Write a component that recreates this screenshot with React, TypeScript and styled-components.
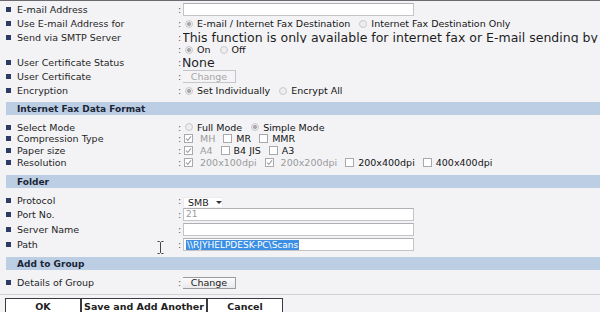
import styled, { createGlobalStyle } from "styled-components"

const GlobalStyle = createGlobalStyle`
  html, body {
    margin: 0;
    padding: 0;
    background: #f3f3f6;
  }
  body {
    font-family: "DejaVu Sans", Verdana, sans-serif;
    font-size: 9.5px;
    color: #222;
    overflow: hidden;
  }
`

const Page = styled.div`
  position: relative;
  width: 600px;
  height: 312px;
  overflow: hidden;
  border-top: 1px solid #6a6a70;
  box-sizing: border-box;
`

const Section = styled.div<{ top: number }>`
  margin-top: ${(p) => p.top}px;
`

const Row = styled.div<{ h: number }>`
  display: grid;
  grid-template-columns: 172px 5px 1fr;
  align-items: center;
  height: ${(p) => p.h}px;
  padding-left: 6px;
`

const Label = styled.div<{ bullet?: boolean }>`
  display: flex;
  align-items: center;
  gap: 6px;
  white-space: nowrap;
  color: #1f1f1f;

  &::before {
    content: "";
    width: 5px;
    height: 5px;
    background: ${(p) => (p.bullet === false ? "transparent" : "#2c3c66")};
  }
`

const Colon = styled.span`
  color: #555;
`

const Value = styled.div`
  display: flex;
  align-items: center;
  white-space: nowrap;
  overflow: hidden;
  height: 100%;
`

const BigText = styled.span`
  font-size: 12.5px;
  color: #1e1e1e;
  margin-left: -1px;
`

const Band = styled.div<{ top: number }>`
  display: flex;
  align-items: center;
  margin: ${(p) => p.top}px 0 0 6px;
  height: 13px;
  padding-left: 11px;
  background: #bbcee4;
  font-weight: bold;
  font-size: 9px;
  color: #1c2536;
`

const Option = styled.span<{ disabled?: boolean }>`
  display: inline-flex;
  align-items: center;
  gap: ${(p) => (p.disabled ? 7 : 4)}px;
  margin-right: 7px;
  color: ${(p) => (p.disabled ? "#9a9a9a" : "#141414")};
`

const Radio = styled.span<{ checked?: boolean }>`
  width: 8px;
  height: 8px;
  border-radius: 50%;
  box-sizing: border-box;
  border: 1px solid #c9c9cc;
  margin-left: 2px;
  background: ${(p) =>
    p.checked
      ? "radial-gradient(circle, #a8a8ac 0 1.8px, #ececee 2.2px)"
      : "#ededf0"};
`

const Box = styled.span`
  display: inline-flex;
  align-items: center;
  justify-content: center;
  width: 9px;
  height: 9px;
  box-sizing: border-box;
  border: 1px solid #a9a9ad;
  background: #fff;
  margin-left: 1px;
`

const TextInput = styled.div<{ w?: number }>`
  display: flex;
  align-items: center;
  box-sizing: border-box;
  width: ${(p) => p.w ?? 231}px;
  height: 13px;
  border: 1px solid #c4c4c8;
  border-top-color: #b0b0b4;
  background: #fff;
  padding-left: 2px;
  color: #9a9a9a;
  font-size: 9px;
`

const Selected = styled.span`
  background: #3c8fe3;
  color: #fff;
  line-height: 10px;
  padding: 0 1px;
`

const Select = styled.div`
  display: flex;
  align-items: center;
  gap: 7px;
  width: 40px;
  height: 11px;
  box-sizing: border-box;
  padding-left: 4px;
  background: #fff;
  border: 1px solid #ececef;
  color: #1a1a1a;
  margin-top: 3px;
`

const Caret = styled.span`
  width: 0;
  height: 0;
  border-left: 3px solid transparent;
  border-right: 3px solid transparent;
  border-top: 3px solid #333;
`

const SmallButton = styled.div<{ disabled?: boolean }>`
  display: flex;
  align-items: center;
  justify-content: center;
  box-sizing: border-box;
  width: 54px;
  height: ${(p) => (p.disabled ? 13 : 12)}px;
  border: 1px solid ${(p) => (p.disabled ? "#c6c6c9" : "#9b9ba0")};
  background: ${(p) =>
    p.disabled ? "#f4f4f6" : "linear-gradient(#fbfbfc, #e9e9ec)"};
  color: ${(p) => (p.disabled ? "#a5a5a8" : "#1a1a1a")};
  margin-left: -1px;
`

const Divider = styled.div`
  margin-top: 4px;
  height: 1px;
  background: #d2d2d6;
`

const ButtonBar = styled.div`
  display: flex;
  margin: 3px 0 0 5px;
`

const FormButton = styled.div<{ w: number }>`
  display: flex;
  align-items: center;
  justify-content: center;
  box-sizing: border-box;
  width: ${(p) => p.w}px;
  height: 18px;
  padding-bottom: 2px;
  border: 1px solid #3a3a3e;
  background: #fff;
  font-weight: bold;
  color: #222;
`

const Cursor = styled.svg`
  position: absolute;
  left: 157px;
  top: 240px;
`

function Check() {
  return (
    <svg width="7" height="7" viewBox="0 0 7 7">
      <path d="M1 3.6 L2.8 5.4 L6 1.4" fill="none" stroke="#a2a2a6" strokeWidth="1.1" />
    </svg>
  )
}

function CheckOption({ checked, disabled, children }: { checked?: boolean; disabled?: boolean; children: string }) {
  return (
    <Option disabled={disabled}>
      <Box>{checked && <Check />}</Box>
      {children}
    </Option>
  )
}

function RadioOption({ checked, children }: { checked?: boolean; children: string }) {
  return (
    <Option>
      <Radio checked={checked} />
      {children}
    </Option>
  )
}

function Field({ label, h, bullet, children }: { label: string; h: number; bullet?: boolean; children?: React.ReactNode }) {
  return (
    <Row h={h}>
      <Label bullet={bullet}>{label}</Label>
      <Colon>:</Colon>
      <Value>{children}</Value>
    </Row>
  )
}

export default function App() {
  return (
    <Page>
      <GlobalStyle />

      <Section top={1}>
        <Field label="E-mail Address" h={14}>
          <TextInput />
        </Field>
        <Field label="Use E-mail Address for" h={15}>
          <RadioOption checked>E-mail / Internet Fax Destination</RadioOption>
          <RadioOption>Internet Fax Destination Only</RadioOption>
        </Field>
        <Field label="Send via SMTP Server" h={12}>
          <BigText>This function is only available for internet fax or E-mail sending by</BigText>
        </Field>
        <Field label="" h={13} bullet={false}>
          <RadioOption checked>On</RadioOption>
          <RadioOption>Off</RadioOption>
        </Field>
        <Field label="User Certificate Status" h={13}>
          <BigText>None</BigText>
        </Field>
        <Field label="User Certificate" h={14}>
          <SmallButton disabled>Change</SmallButton>
        </Field>
        <Field label="Encryption" h={15}>
          <RadioOption checked>Set Individually</RadioOption>
          <RadioOption>Encrypt All</RadioOption>
        </Field>
      </Section>

      <Band top={4}>Internet Fax Data Format</Band>

      <Section top={6}>
        <Field label="Select Mode" h={12}>
          <RadioOption>Full Mode</RadioOption>
          <RadioOption checked>Simple Mode</RadioOption>
        </Field>
        <Field label="Compression Type" h={11}>
          <CheckOption checked disabled>MH</CheckOption>
          <CheckOption>MR</CheckOption>
          <CheckOption>MMR</CheckOption>
        </Field>
        <Field label="Paper size" h={12}>
          <CheckOption checked disabled>A4</CheckOption>
          <CheckOption>B4 JIS</CheckOption>
          <CheckOption>A3</CheckOption>
        </Field>
        <Field label="Resolution" h={13}>
          <CheckOption checked disabled>200x100dpi</CheckOption>
          <CheckOption checked disabled>200x200dpi</CheckOption>
          <CheckOption>200x400dpi</CheckOption>
          <CheckOption>400x400dpi</CheckOption>
        </Field>
      </Section>

      <Band top={6}>Folder</Band>

      <Section top={6}>
        <Field label="Protocol" h={13}>
          <Select>
            SMB
            <Caret />
          </Select>
        </Field>
        <Field label="Port No." h={14}>
          <TextInput>21</TextInput>
        </Field>
        <Field label="Server Name" h={16}>
          <TextInput />
        </Field>
        <Field label="Path" h={15}>
          <TextInput>
            <Selected>\\RJYHELPDESK-PC\Scans</Selected>
          </TextInput>
        </Field>
      </Section>

      <Band top={5}>Add to Group</Band>

      <Section top={5}>
        <Field label="Details of Group" h={15}>
          <SmallButton>Change</SmallButton>
        </Field>
      </Section>

      <Divider />

      <ButtonBar>
        <FormButton w={76}>OK</FormButton>
        <FormButton w={126}>Save and Add Another</FormButton>
        <FormButton w={76}>Cancel</FormButton>
      </ButtonBar>

      <Cursor width="7" height="13" viewBox="0 0 7 13">
        <path d="M0.5 0.5 H2.5 L3.5 1.5 L4.5 0.5 H6.5 M3.5 1.5 V11.5 M0.5 12.5 H2.5 L3.5 11.5 L4.5 12.5 H6.5" fill="none" stroke="#444" strokeWidth="1" />
      </Cursor>
    </Page>
  )
}
